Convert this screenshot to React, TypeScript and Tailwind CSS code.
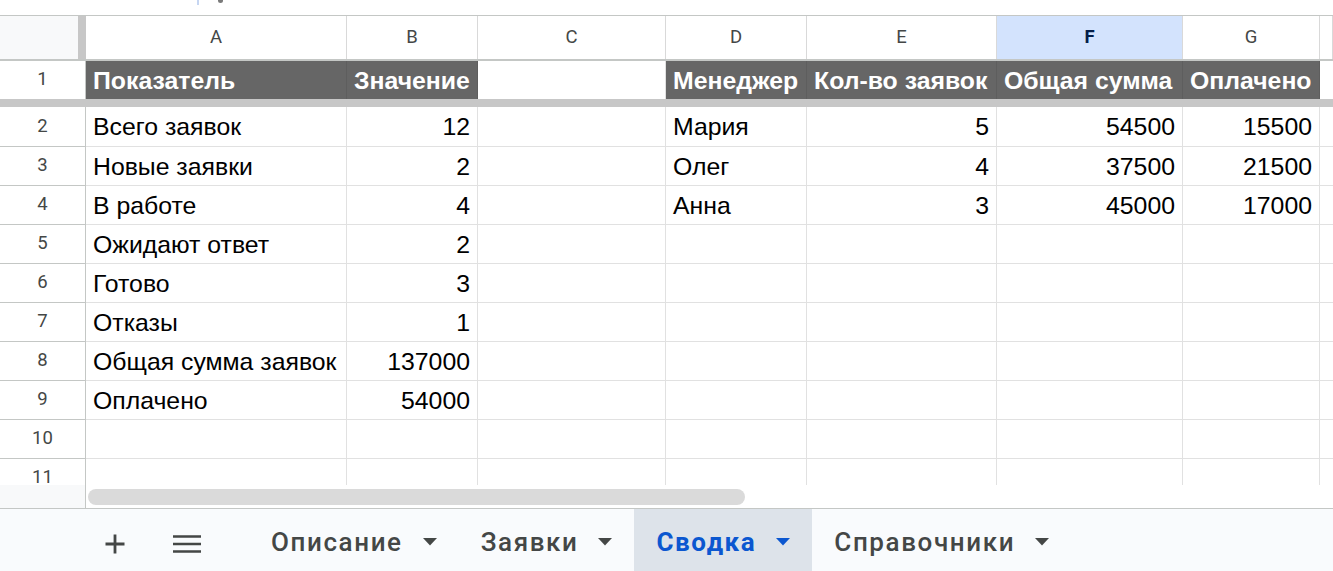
import React from "react";

const COLS = "grid grid-cols-[86px_261px_131px_188px_141px_190px_186px_137px_1fr]";

const letters = ["A", "B", "C", "D", "E", "F", "G", ""];

const left: [string, string][] = [
  ["Всего заявок", "12"],
  ["Новые заявки", "2"],
  ["В работе", "4"],
  ["Ожидают ответ", "2"],
  ["Готово", "3"],
  ["Отказы", "1"],
  ["Общая сумма заявок", "137000"],
  ["Оплачено", "54000"],
];

const right: [string, string, string, string][] = [
  ["Мария", "5", "54500", "15500"],
  ["Олег", "4", "37500", "21500"],
  ["Анна", "3", "45000", "17000"],
];

function RowNum({ n }: { n: number }) {
  return (
    <div className="flex items-center justify-center border-r border-b border-[#c4c7c5] bg-white text-[18.5px] text-[#444746] font-['Roboto',sans-serif]">
      {n}
    </div>
  );
}

function Cell({ text, align }: { text?: string; align?: "l" | "r" }) {
  return (
    <div
      className={
        "flex items-center border-r border-b border-[#e1e1e1] px-[7px] pt-[1px] overflow-hidden whitespace-nowrap text-[24.8px] text-black " +
        (align === "r" ? "justify-end" : "justify-start")
      }
    >
      {text ?? ""}
    </div>
  );
}

function Caret({ active }: { active?: boolean }) {
  return (
    <svg width="14" height="8" viewBox="0 0 14 8" className="shrink-0">
      <path d="M0 0 L14 0 L7 7.5 Z" fill={active ? "#0b57d0" : "#444746"} />
    </svg>
  );
}

function Tab({ label, active }: { label: string; active?: boolean }) {
  return (
    <div
      className={
        "flex items-center gap-[20px] px-[22px] pt-[4px] " +
        (active ? "bg-[#dde3ea] text-[#0b57d0] font-bold" : "text-[#444746] font-medium")
      }
    >
      <span className="text-[26px] tracking-[1.6px] leading-none">{label}</span>
      <Caret active={active} />
    </div>
  );
}

export default function App() {
  const rows: React.ReactNode[] = [];
  for (let r = 2; r <= 11; r++) {
    const l = left[r - 2];
    const rr = right[r - 2];
    rows.push(
      <div key={r} className={COLS + (r === 2 ? " h-[40px]" : " h-[39px]")}>
        <RowNum n={r} />
        <Cell text={l?.[0]} />
        <Cell text={l?.[1]} align="r" />
        <Cell />
        <Cell text={rr?.[0]} />
        <Cell text={rr?.[1]} align="r" />
        <Cell text={rr?.[2]} align="r" />
        <Cell text={rr?.[3]} align="r" />
        <Cell />
      </div>
    );
  }

  return (
    <div className="w-[1333px] h-[571px] overflow-hidden bg-white flex flex-col font-['Liberation_Sans',Arial,sans-serif]">
      {/* top strip */}
      <div className="h-[16px] shrink-0 border-b border-[#c4c7c5] relative">
        <div className="absolute left-[197px] top-0 w-[2px] h-[5px] bg-[#c6d6f2]" />
        <div className="absolute left-[218px] top-0 w-[5px] h-[3px] rounded-b-full bg-[#7a7a7a]" />
      </div>

      {/* grid */}
      <div className="h-[469px] shrink-0 overflow-hidden">
        {/* column headers */}
        <div className={COLS + " h-[45px] border-b-2 border-[#c4c7c5]"}>
          <div className="flex">
            <div className="flex-1 bg-[#f8f9fa]" />
            <div className="w-[8px] bg-[#c7c7c7]" />
          </div>
          {letters.map((c, i) => (
            <div
              key={i}
              className={
                "flex items-center justify-center border-r border-[#d9d9d9] text-[18.5px] font-['Roboto',sans-serif] " +
                (c === "F" ? "bg-[#d3e3fd] text-[#041e49] font-bold" : "bg-white text-[#444746]")
              }
            >
              {c}
            </div>
          ))}
        </div>

        {/* row 1 */}
        <div className={COLS + " h-[38px]"}>
          <div className="flex items-center justify-center border-r border-[#c4c7c5] bg-white text-[18.5px] text-[#444746] font-['Roboto',sans-serif]">
            1
          </div>
          {["Показатель", "Значение"].map((t) => (
            <div
              key={t}
              className="flex items-center bg-[#666666] border-r border-[#5e5e5e] px-[7px] pt-[1px] text-[24.8px] font-bold text-white whitespace-nowrap overflow-hidden"
            >
              {t}
            </div>
          ))}
          <div className="bg-white border-r border-[#e1e1e1]" />
          {["Менеджер", "Кол-во заявок", "Общая сумма", "Оплачено"].map((t) => (
            <div
              key={t}
              className="flex items-center bg-[#666666] border-r border-[#5e5e5e] px-[7px] pt-[1px] text-[24.8px] font-bold text-white whitespace-nowrap overflow-hidden"
            >
              {t}
            </div>
          ))}
          <div className="bg-white" />
        </div>

        {/* freeze bar */}
        <div className="h-[8px] bg-[#c7c7c7]" />

        {rows}
      </div>

      {/* scrollbar */}
      <div className="h-[23px] shrink-0 flex">
        <div className="w-[86px] bg-[#f8f9fa] border-r border-[#c4c7c5]" />
        <div className="flex-1 flex items-center pl-[2px]">
          <div className="w-[657px] h-[16px] rounded-full bg-[#dadada]" />
        </div>
      </div>

      {/* tab bar */}
      <div className="h-[63px] shrink-0 border-t border-[#c4c7c5] bg-[#f9fbfd] flex font-['Roboto',sans-serif]">
        <div className="w-[93px]" />
        <div className="w-[44px] flex items-center justify-center pt-[7px]">
          <svg width="20" height="20" viewBox="0 0 20 20">
            <path d="M10 0.5 V19.5 M0.5 10 H19.5" stroke="#444746" strokeWidth="2.8" />
          </svg>
        </div>
        <div className="w-[28px]" />
        <div className="w-[44px] flex items-center justify-center pt-[7px]">
          <svg width="28" height="18" viewBox="0 0 28 18">
            <path d="M0 1.5 H28 M0 9 H28 M0 16.5 H28" stroke="#444746" strokeWidth="2.6" />
          </svg>
        </div>
        <div className="w-[40px]" />
        <Tab label="Описание" />
        <Tab label="Заявки" />
        <Tab label="Сводка" active />
        <Tab label="Справочники" />
      </div>
    </div>
  );
}
